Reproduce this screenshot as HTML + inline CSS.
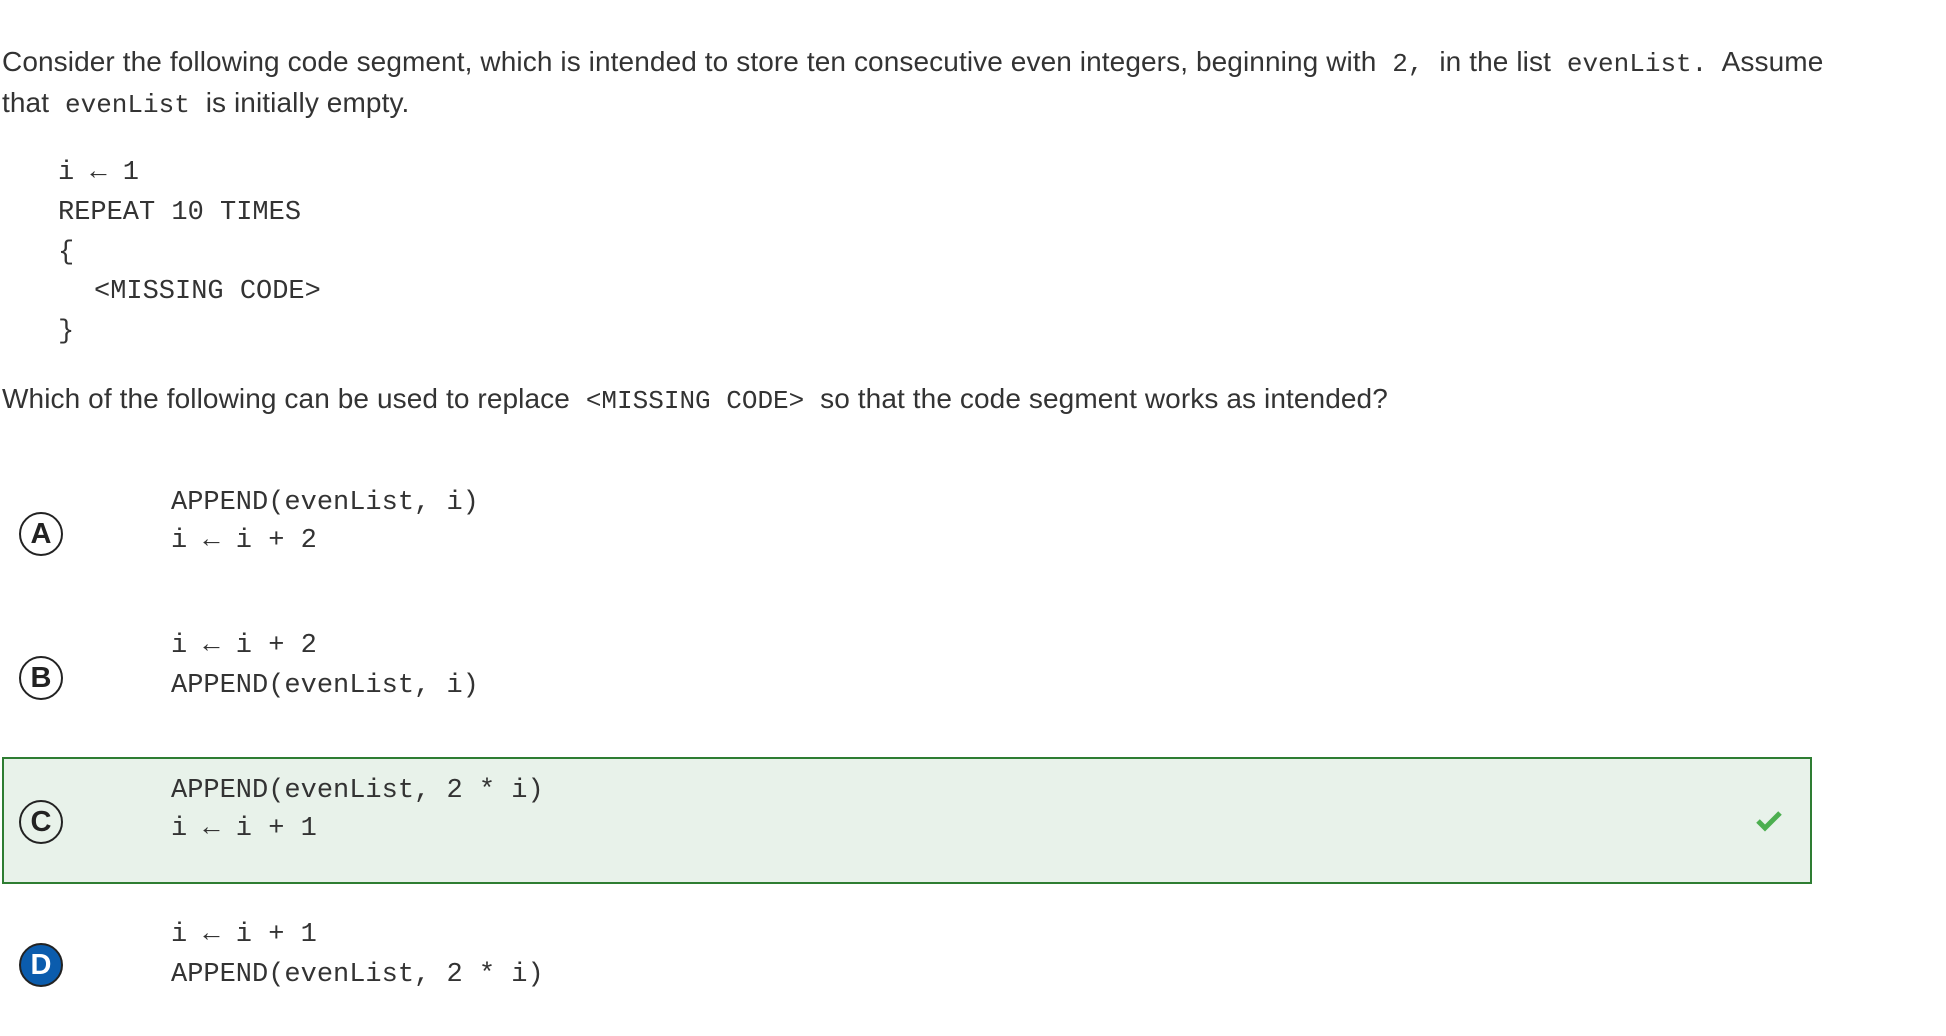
<!DOCTYPE html>
<html><head><meta charset="utf-8"><style>
body{margin:0;width:1946px;height:1036px;background:#fff;position:relative;overflow:hidden;font-family:"Liberation Sans",sans-serif;color:#333;}
.t{position:absolute;left:2px;font-size:28px;letter-spacing:0.1px;white-space:nowrap;line-height:40px;}
code{font-family:"Liberation Mono",monospace;font-size:26px;color:#333;padding:0 8px;letter-spacing:0;}
.m{font-family:"Liberation Mono",monospace;font-size:27px;color:#333;position:absolute;white-space:nowrap;line-height:40px;}
.circ{position:absolute;left:19px;width:44px;height:44px;border:2px solid #222;border-radius:50%;box-sizing:border-box;text-align:center;font-family:"Liberation Sans",sans-serif;font-weight:bold;font-size:29px;line-height:41px;color:#222;}
.box{position:absolute;left:2px;top:757px;width:1810px;height:127px;box-sizing:border-box;border:2px solid #2e7d32;background:#e8f2ea;}
</style></head><body>
<div class="t" style="top:42px;">Consider the following code segment, which is intended to store ten consecutive even integers, beginning with <code>2,</code> in the list <code>evenList.</code> Assume</div>
<div class="t" style="top:83px;">that <code>evenList</code> is initially empty.</div>
<div class="m" style="left:58px;top:153px;">i ← 1</div>
<div class="m" style="left:58px;top:193px;">REPEAT 10 TIMES</div>
<div class="m" style="left:58px;top:233px;">{</div>
<div class="m" style="left:94px;top:272px;">&lt;MISSING CODE&gt;</div>
<div class="m" style="left:58px;top:312px;">}</div>
<div class="t" style="top:379px;">Which of the following can be used to replace <code>&lt;MISSING CODE&gt;</code> so that the code segment works as intended?</div>

<div class="circ" style="top:512px;">A</div>
<div class="m" style="left:171px;top:483px;">APPEND(evenList, i)</div>
<div class="m" style="left:171px;top:521px;">i ← i + 2</div>

<div class="circ" style="top:656px;">B</div>
<div class="m" style="left:171px;top:626px;">i ← i + 2</div>
<div class="m" style="left:171px;top:666px;">APPEND(evenList, i)</div>

<div class="box"></div>
<div class="circ" style="top:800px;">C</div>
<div class="m" style="left:171px;top:771px;">APPEND(evenList, 2 * i)</div>
<div class="m" style="left:171px;top:809px;">i ← i + 1</div>
<svg style="position:absolute;left:1755px;top:808px" width="28" height="24" viewBox="0 0 28 24"><path d="M3 13 L10 20 L25 5" stroke="#4caf50" stroke-width="5" fill="none"/></svg>

<div class="circ" style="top:943px;background:#0b5cad;color:#fff;border-color:#222;">D</div>
<div class="m" style="left:171px;top:915px;">i ← i + 1</div>
<div class="m" style="left:171px;top:955px;">APPEND(evenList, 2 * i)</div>
</body></html>
